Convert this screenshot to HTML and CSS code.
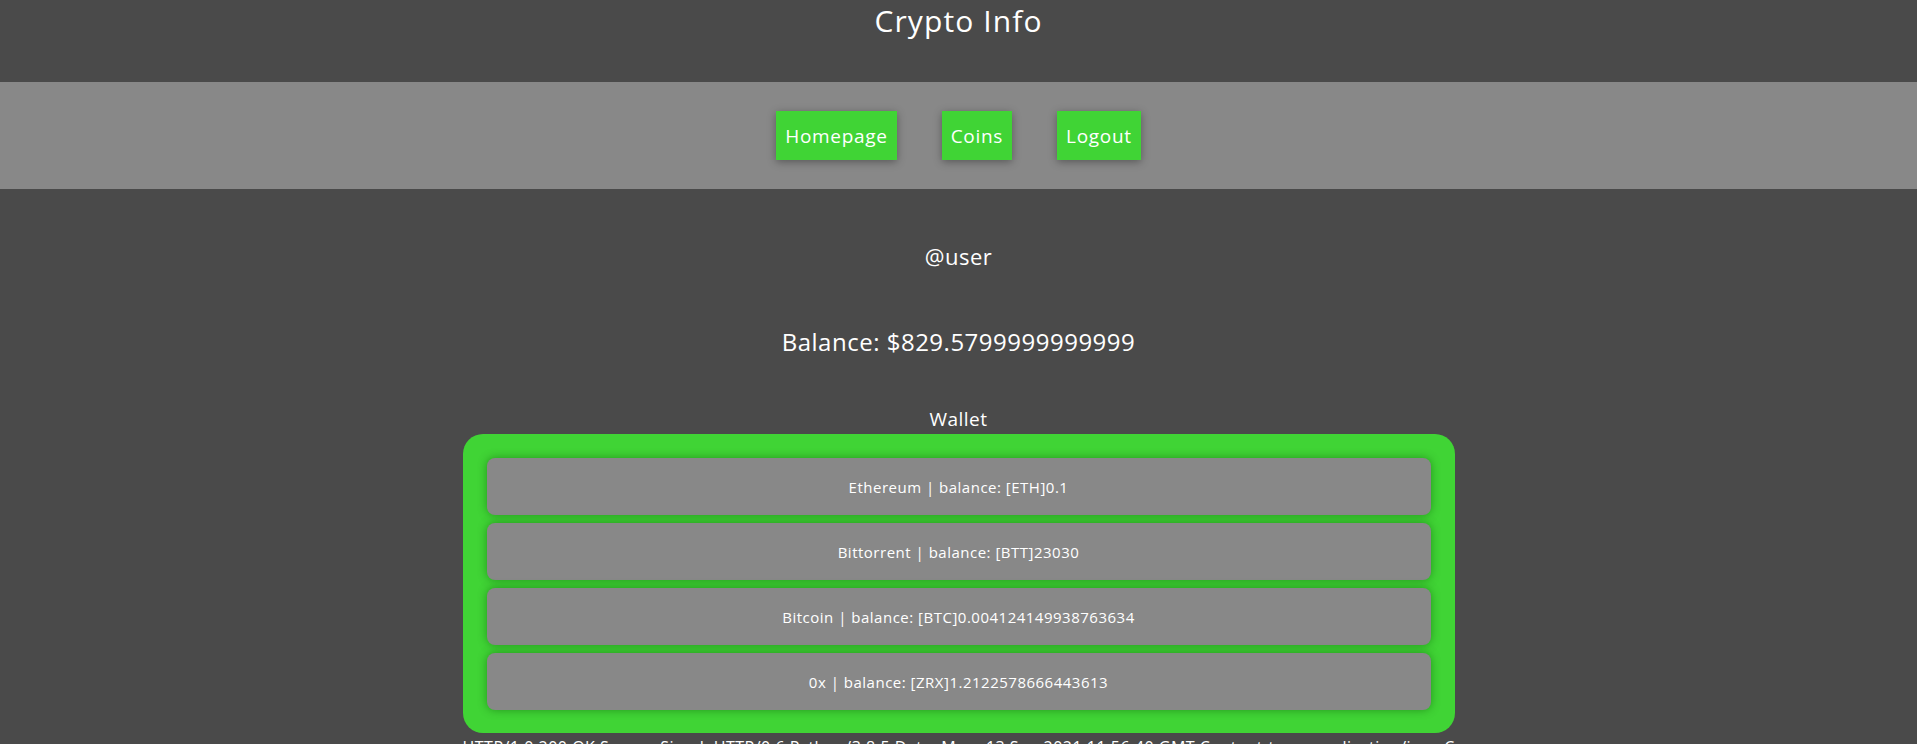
FILE: index.html
```html
<!DOCTYPE html>
<html>
<head>
<meta charset="utf-8">
<title>Crypto Info</title>
<link rel="stylesheet" href="styles.css">
</head>
<body>
<header class="top">
  <h1 class="title">Crypto Info</h1>
</header>
<nav class="nav">
  <a class="btn" href="#">Homepage</a>
  <a class="btn" href="#">Coins</a>
  <a class="btn" href="#">Logout</a>
</nav>
<main class="main">
  <div class="user">@user</div>
  <div class="balance">Balance: $829.5799999999999</div>
  <div class="wallet-title">Wallet</div>
  <div class="wallet">
    <div class="coin">Ethereum | balance: [ETH]0.1</div>
    <div class="coin">Bittorrent | balance: [BTT]23030</div>
    <div class="coin">Bitcoin | balance: [BTC]0.004124149938763634</div>
    <div class="coin">0x | balance: [ZRX]1.2122578666443613</div>
  </div>
  <div class="raw">HTTP/1.0 200 OK Server: SimpleHTTP/0.6 Python/3.8.5 Date: Mon, 13 Sep 2021 11:56:40 GMT Content-type: application/json Content-Length: 482 Last-Modified: Mon, 13 Sep 2021 11:50:12 GMT</div>
</main>
</body>
</html>
```
FILE: styles.css
```css
html, body {
  margin: 0;
  padding: 0;
}
body {
  background: #4a4a4a;
  color: #ffffff;
  font-family: "Open Sans", "Noto Sans", sans-serif;
  letter-spacing: 0.5px;
  overflow: hidden;
}
.top {
  height: 82px;
  display: flex;
  justify-content: center;
}
.title {
  margin: 0;
  font-size: 30px;
  font-weight: 400;
  line-height: 41px;
  letter-spacing: 1.1px;
}
.nav {
  height: 107px;
  background: #888888;
  display: flex;
  justify-content: center;
  align-items: center;
  gap: 45px;
}
.btn {
  display: flex;
  align-items: center;
  justify-content: center;
  height: 49px;
  padding: 0 9px;
  background: #40d435;
  color: #ffffff;
  text-decoration: none;
  font-size: 19px;
  letter-spacing: 0.7px;
  box-shadow: 0 2px 8px rgba(0, 0, 0, 0.35);
}
.main {
  display: flex;
  flex-direction: column;
  align-items: center;
}
.user {
  margin-top: 52px;
  font-size: 22px;
  line-height: 30px;
}
.balance {
  margin-top: 54px;
  font-size: 24px;
  line-height: 34px;
}
.wallet-title {
  margin-top: 47px;
  font-size: 19px;
  line-height: 26px;
}
.wallet {
  margin-top: 2px;
  width: 944px;
  padding: 24px 24px 23px;
  background: #40d435;
  border-radius: 20px;
  display: flex;
  flex-direction: column;
  gap: 8px;
}
.coin {
  height: 57px;
  background: #888888;
  border-radius: 8px;
  display: flex;
  align-items: center;
  justify-content: center;
  font-size: 15px;
  box-shadow: 0 0 10px rgba(0, 70, 0, 0.45);
}
.raw {
  width: 992px;
  margin-top: 4px;
  font-size: 16px;
  line-height: 20px;
  white-space: nowrap;
  overflow: hidden;
}
```
